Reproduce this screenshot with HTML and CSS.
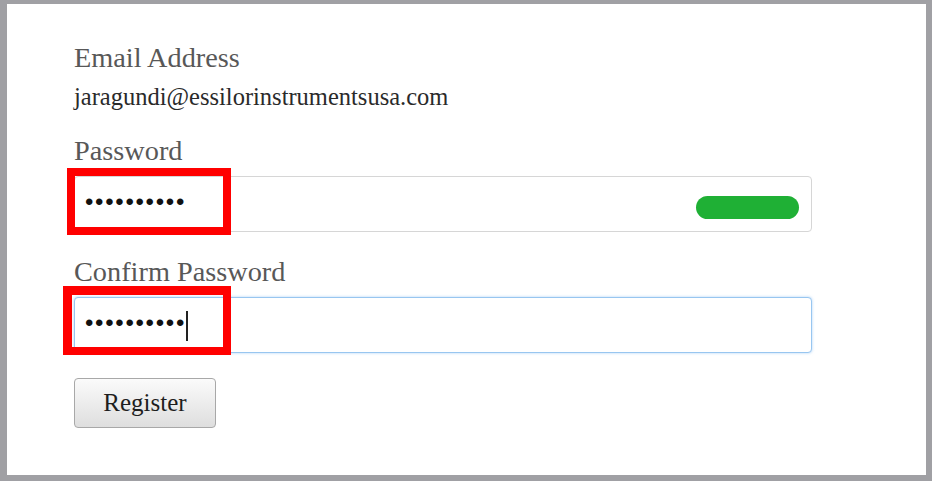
FILE: index.html
```html
<!DOCTYPE html>
<html lang="en">
<head>
<meta charset="utf-8">
<title>Register</title>
<link rel="stylesheet" href="styles.css">
</head>
<body>
<div class="frame">
  <form class="form">
    <div class="field">
      <div class="label">Email Address</div>
      <div class="value">jaragundi@essilorinstrumentsusa.com</div>
    </div>
    <div class="field field-password">
      <div class="label">Password</div>
      <div class="input">
        <span class="dots">••••••••••</span>
        <span class="strength"></span>
        <span class="mark mark-1"></span>
      </div>
    </div>
    <div class="field field-confirm">
      <div class="label">Confirm Password</div>
      <div class="input input-focus">
        <span class="dots">••••••••••</span><span class="caret"></span>
        <span class="mark mark-2"></span>
      </div>
    </div>
    <button type="button" class="btn">Register</button>
  </form>
</div>
</body>
</html>
```

FILE: styles.css
```css
html, body {
  margin: 0;
  padding: 0;
}
body {
  width: 932px;
  height: 481px;
  background: #a0a0a4;
  font-family: "Liberation Serif", "Times New Roman", serif;
}
.frame {
  box-sizing: border-box;
  width: 932px;
  height: 481px;
  background: #ffffff;
  border-style: solid;
  border-color: #a0a0a4;
  border-width: 4px 6px 6px 7px;
}
.form {
  padding: 38px 0 0 67px;
  width: 738px;
}
.label {
  font-size: 28.3px;
  line-height: 32px;
  color: #585858;
}
.value {
  margin-top: 9px;
  font-size: 24.5px;
  line-height: 28px;
  color: #2a2a2a;
}
.field-password {
  margin-top: 24px;
}
.field-confirm {
  margin-top: 24px;
}
.input {
  position: relative;
  box-sizing: border-box;
  margin-top: 9px;
  height: 56px;
  width: 738px;
  border: 1px solid #d6d6d6;
  border-radius: 4px;
  background: #fff;
  display: flex;
  align-items: center;
  padding: 0 12px 0 10px;
}
.input-focus {
  border-color: #98c6f0;
  box-shadow: 0 0 3px rgba(120, 180, 240, 0.6);
}
.dots {
  font-family: "Liberation Sans", Arial, sans-serif;
  font-size: 24px;
  letter-spacing: 1.7px;
  color: #111;
  line-height: 24px;
  margin-top: -4px;
}
.caret {
  display: inline-block;
  width: 2px;
  height: 30px;
  background: #222;
  margin-top: 2px;
}
.strength {
  margin-left: auto;
  margin-top: 7px;
  width: 103px;
  height: 23px;
  border-radius: 12px;
  background: #1fb035;
}
.mark {
  position: absolute;
  border: 8px solid #ff0000;
  box-sizing: border-box;
}
.mark-1 {
  left: -8px;
  top: -9px;
  width: 164px;
  height: 67px;
}
.mark-2 {
  left: -12px;
  top: -12px;
  width: 168px;
  height: 69px;
  border-left-width: 9px;
  border-top-width: 9px;
}
.btn {
  margin-top: 25px;
  width: 142px;
  height: 50px;
  box-sizing: border-box;
  border: 1px solid #a8a8a8;
  border-radius: 4px;
  background: linear-gradient(#fbfbfb, #dedede);
  font-family: "Liberation Serif", "Times New Roman", serif;
  font-size: 25px;
  color: #1e1e1e;
  padding: 0;
  display: block;
}
```
